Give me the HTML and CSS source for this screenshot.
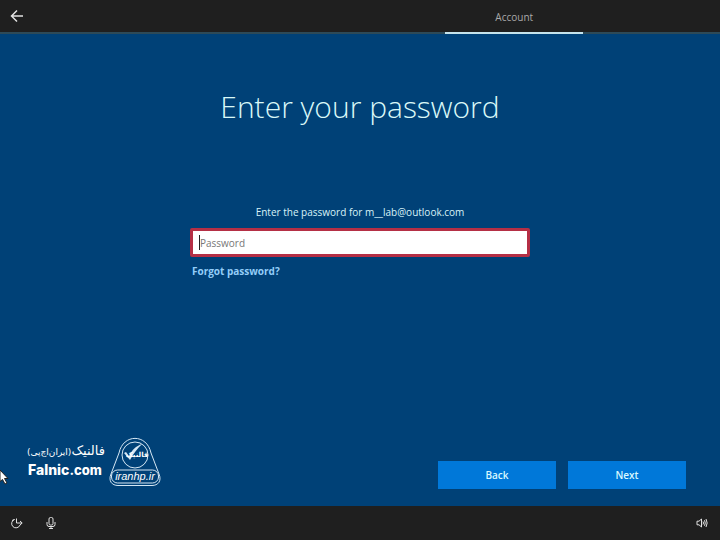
FILE: index.html
```html
<!DOCTYPE html>
<html lang="en">
<head>
    <meta charset="UTF-8">
    <meta name="viewport" content="width=device-width, initial-scale=1.0">
    <title>Enter your password</title>
    <link rel="stylesheet" href="styles.css">
</head>
<body>
    <header class="topbar">
        <button class="icon-btn back-arrow" type="button" aria-label="Go back">
            <svg width="14" height="14" viewBox="0 0 14 14"><path d="M13 7H1.500M7 1.500L1.500 7L7 12.500"/></svg>
        </button>
        <nav class="tabs">
            <a class="tab" href="#account">Account</a>
        </nav>
    </header>

    <main class="main">
        <h1>Enter your password</h1>
        <form class="login" id="login">
            <label class="prompt" for="password">Enter the password for m__lab@outlook.com</label>
            <div class="field">
                <input id="password" type="password" placeholder="Password">
                <span class="caret"></span>
            </div>
            <a class="forgot" href="#forgot">Forgot password?</a>
        </form>

        <div class="bottom">
            <div class="brand">
                <div class="brand-text">
                    <div class="brand-fa" lang="fa" dir="rtl">فالنیک<span class="brand-sub">(ایران‌اچ‌پی)</span></div>
                    <div class="brand-en">Falnic<span class="brand-com">.com</span></div>
                </div>
                <svg class="brand-logo" width="52" height="50" viewBox="0 0 52 50">
                    <path d="M10 16C14 -3.500 38 -3.500 42 16L50 37C53 44 49 48.500 43 48.500H9C3 48.500 -1 44 2 37Z"/>
                    <circle cx="26" cy="18" r="13"/>
                    <path class="tick" d="M15 16L17 15L20 19C23 13 27 9 33 7C28 12 24 17 21 23Z"/>
                    <text class="logo-fa" x="28" y="20" text-anchor="middle">فالنیک</text>
                    <rect x="2.500" y="33" width="47" height="13" rx="6"/>
                    <text class="logo-en" x="26" y="43" text-anchor="middle">iranhp.ir</text>
                </svg>
            </div>
            <div class="actions">
                <button class="btn" type="button">Back</button>
                <button class="btn" type="submit" form="login">Next</button>
            </div>
        </div>

        <svg class="pointer" width="10" height="16" viewBox="0 0 10 16"><path d="M0 1L8 9.500H4.500L7 14L5 15L2.500 10.500L0 12.500Z"/></svg>
    </main>

    <footer class="taskbar">
        <div class="tools">
            <button class="icon-btn" type="button" aria-label="Ease of access">
                <svg width="12" height="12" viewBox="0 0 12 12"><path d="M3.500 2.500A4.300 4.300 0 1 0 9 8M5.500 1.500V6H11M9 4L11.200 6L9 8M1 3.500L3.500 2.500"/></svg>
            </button>
            <button class="icon-btn" type="button" aria-label="Microphone">
                <svg width="12" height="12" viewBox="0 0 12 12"><rect x="4" y="0.500" width="4" height="7.500" rx="1.500"/><path d="M2 5V7.500Q2 9.500 4 9.500H8Q10 9.500 10 7.500V5M6 9.500V11.500M4 11.500H8"/></svg>
            </button>
        </div>
        <button class="icon-btn" type="button" aria-label="Volume">
            <svg width="12" height="12" viewBox="0 0 12 12"><path d="M1 4.200H3L5.500 2V10L3 7.800H1ZM7 4.500Q8 6 7 7.500M8.500 3.200Q10 6 8.500 8.800M10 2Q12.300 6 10 10"/></svg>
        </button>
    </footer>
</body>
</html>
```

FILE: styles.css
```css
* { margin: 0; padding: 0; box-sizing: border-box; }
body {
    display: flex;
    flex-direction: column;
    min-height: 100vh;
    font-family: "Open Sans", "Noto Sans", sans-serif;
    font-size: 10px;
    line-height: 16px;
    background: #004177;
    color: #d9f3f8;
}
button, input { font: inherit; }
svg { display: block; overflow: visible; }

.icon-btn {
    background: none;
    border: none;
    color: #e2e2e2;
}
.icon-btn svg {
    fill: none;
    stroke: currentColor;
    stroke-width: 1;
}
.back-arrow svg { stroke-width: 1.5; }

.topbar {
    display: flex;
    justify-content: space-between;
    height: 34px;
    padding: 0 19% 0 10px;
    background: #1f1f1f;
    border-bottom: 2px solid #2d4a58;
}
.tab {
    display: block;
    width: 138px;
    height: 34px;
    padding-top: 9px;
    border-bottom: 2px solid #c5e4ec;
    color: #a9a9a9;
    text-align: center;
    text-decoration: none;
}

.main {
    position: relative;
    flex: 1;
    display: flex;
    flex-direction: column;
    align-items: center;
    padding: 53px 0 17px;
}
h1 {
    font-size: 30px;
    font-weight: 300;
    line-height: 40px;
    color: #d9f8f8;
}
.login {
    width: 47%;
    min-width: 340px;
    margin-top: 77px;
}
.prompt {
    display: block;
    font-weight: 500;
    text-align: center;
}
.field {
    position: relative;
    margin: 8px 0 6px;
}
.field input {
    display: block;
    width: 100%;
    height: 29px;
    padding: 0 7px;
    background: #fff;
    border: 3px solid #b52f45;
    border-radius: 2px;
    outline: none;
    color: #333;
}
.field input::placeholder { color: #777; opacity: 1; }
.caret {
    position: absolute;
    left: 9px;
    top: 7px;
    width: 1px;
    height: 15px;
    background: #222;
}
.forgot {
    margin-left: 2px;
    color: #93cdf8;
    font-weight: 700;
    text-decoration: none;
}

.bottom {
    display: flex;
    justify-content: space-between;
    align-items: flex-end;
    width: 100%;
    margin-top: auto;
    padding: 0 34px 0 28px;
}
.brand {
    display: flex;
    gap: 4px;
    color: #fff;
}
.brand-text {
    width: 77px;
    padding-top: 4px;
}
.brand-fa {
    font-family: "DejaVu Sans", sans-serif;
    font-size: 13px;
    line-height: 20px;
    white-space: nowrap;
}
.brand-sub { font-size: 9px; }
.brand-en {
    font-family: Inter, sans-serif;
    font-size: 14px;
    font-weight: 800;
    line-height: 16px;
}
.brand-com { font-size: 13px; }
.brand-logo {
    flex: none;
    margin-bottom: 2px;
    fill: none;
    stroke: #d5e7f4;
    stroke-width: 1;
}
.brand-logo text {
    fill: #fff;
    stroke: none;
}
.brand-logo .tick { fill: #d5e7f4; stroke: none; }
.logo-fa { font: bold 7px "DejaVu Sans", sans-serif; }
.logo-en { font: italic 11px "Liberation Sans", sans-serif; }

.actions {
    display: flex;
    gap: 12px;
}
.btn {
    width: 118px;
    height: 28px;
    background: #0078d9;
    border: none;
    color: #d9f8ff;
    font-weight: 600;
}

.pointer {
    position: absolute;
    left: 0;
    bottom: 21px;
    fill: #fff;
    stroke: #222;
    stroke-width: 1;
}

.taskbar {
    display: flex;
    justify-content: space-between;
    align-items: center;
    height: 34px;
    padding: 0 12px 0 11px;
    background: #1f1f1f;
}
.tools {
    display: flex;
    gap: 22px;
}
```
